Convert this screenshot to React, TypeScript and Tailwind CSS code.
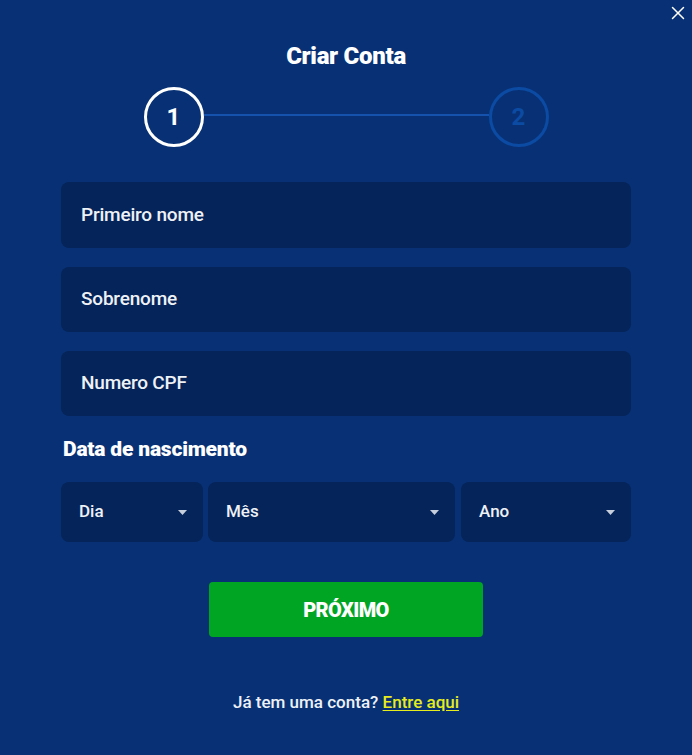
import { X } from "lucide-react";

/* ── Small dropdown caret ── */
function Caret() {
  return (
    <svg width="9" height="5" viewBox="0 0 9 5" className="shrink-0">
      <path d="M0 0 H9 L4.5 5 Z" fill="#c7cfdd" />
    </svg>
  );
}

function Field({ label, h }: { label: string; h: string }) {
  return (
    <div className={`${h} rounded-lg bg-[#052459] flex items-center pl-5 text-[19px] font-medium tracking-[-0.2px] text-[#eef1f6]`}>
      {label}
    </div>
  );
}

function Select({ label, className }: { label: string; className: string }) {
  return (
    <div
      className={`h-[60px] rounded-lg bg-[#052459] flex items-center justify-between pl-[18px] pr-4 text-[17px] font-medium text-[#eef1f6] ${className}`}
    >
      <span>{label}</span>
      <Caret />
    </div>
  );
}

export default function App() {
  return (
    <div
      className="relative w-[692px] h-[755px] bg-[#083175] text-white overflow-hidden"
      style={{ fontFamily: "Roboto, 'Liberation Sans', sans-serif" }}
    >
      {/* close button */}
      <button className="absolute top-[2px] right-[3px] text-white">
        <X className="w-[22px] h-[22px]" strokeWidth={1.6} />
      </button>

      <div className="flex flex-col items-center pt-[41px]">
        <h1 className="text-[24px] font-black leading-[30px] tracking-[-0.3px]">Criar Conta</h1>

        {/* ── Stepper ── */}
        <div className="mt-[16px] flex items-center">
          <div className="w-[60px] h-[60px] rounded-full border-[3px] border-white flex items-center justify-center text-[24px] font-bold">
            1
          </div>
          <div className="w-[285px] h-[2px] bg-[#1452ad] -mt-[5px]" />
          <div className="w-[60px] h-[60px] rounded-full border-[3px] border-[#0c4ba4] flex items-center justify-center text-[24px] font-bold text-[#0c4ba4]">
            2
          </div>
        </div>
      </div>

      {/* ── Form ── */}
      <div className="mx-[61px] mt-[35px] flex flex-col gap-[19px]">
        <Field label="Primeiro nome" h="h-[66px]" />
        <Field label="Sobrenome" h="h-[65px]" />
        <Field label="Numero CPF" h="h-[65px]" />
      </div>

      <div className="mx-[61px] mt-[20px]">
        <h2 className="ml-[2px] text-[21px] font-black tracking-[-0.2px] leading-[26px]">Data de nascimento</h2>
        <div className="mt-[20px] flex gap-[5px]">
          <Select label="Dia" className="w-[142px]" />
          <Select label="Mês" className="w-[247px]" />
          <Select label="Ano" className="w-[170px] ml-[1px]" />
        </div>
      </div>

      <div className="flex justify-center mt-[40px]">
        <button className="w-[274px] h-[55px] rounded bg-[#00a524] text-[20px] font-black tracking-[-0.6px] text-white">
          PRÓXIMO
        </button>
      </div>

      <p className="mt-[53px] text-center text-[17px] font-medium text-[#eef1f6]">
        Já tem uma conta?{" "}
        <a className="text-[#e7ec1c] underline underline-offset-2">Entre aqui</a>
      </p>
    </div>
  );
}
